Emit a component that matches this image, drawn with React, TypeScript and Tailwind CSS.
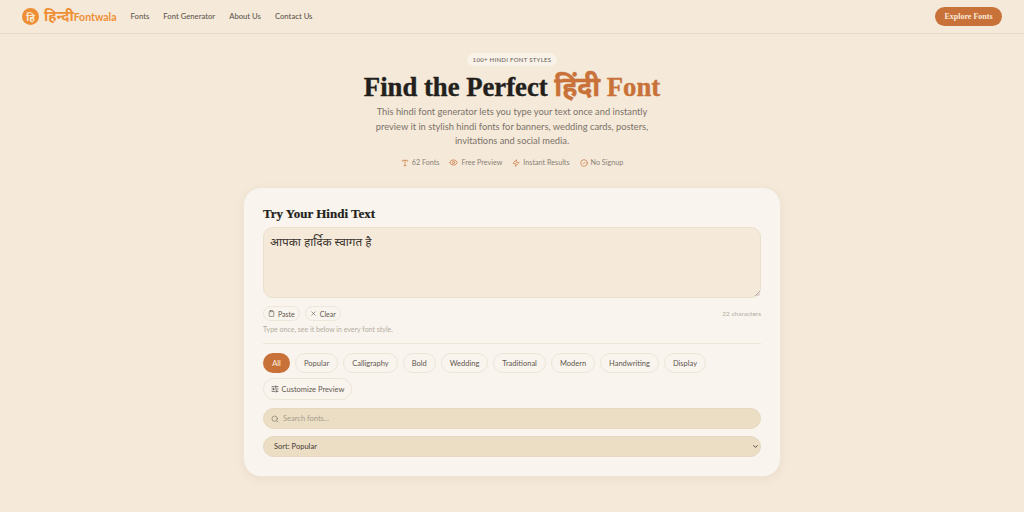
import { ChevronDown, CircleCheck, Clipboard, Eye, Search, SlidersHorizontal, Type, X, Zap } from "lucide-react";

const navLinks = ["Fonts", "Font Generator", "About Us", "Contact Us"];
const filters = ["Popular", "Calligraphy", "Bold", "Wedding", "Traditional", "Modern", "Handwriting", "Display"];
const sans = "font-['Lato','Noto_Sans',sans-serif]";
const serif = "font-['Liberation_Serif','Noto_Sans',serif]";

function Logo() {
  return (
    <div className="flex items-center gap-[5px]">
      <div className="flex h-[17px] w-[17px] items-center justify-center rounded-full bg-[#ee8f35]">
        <span className="text-[10px] font-bold leading-none text-[#f8ead8]">हि</span>
      </div>
      <span className="text-[14.5px] font-bold leading-none text-[#ee8f35]">
        हिन्दी<span className="text-[10.5px]">Fontwala</span>
      </span>
    </div>
  );
}

export default function App() {
  return (
    <div className={`h-[512px] w-[1024px] overflow-hidden bg-[#f5e9d9] ${sans}`}>
      <header className="flex h-[34px] items-center justify-between border-b border-[#e9dccb] px-[22px]">
        <div className="flex items-center gap-[14px]">
          <Logo />
          <nav className="flex items-center gap-[14px] text-[7.7px] font-medium text-[#5f5850]">
            {navLinks.map((link) => (
              <a key={link}>{link}</a>
            ))}
          </nav>
        </div>
        <button className={`h-[19px] w-[67px] rounded-full bg-[#c8723a] text-[8px] font-bold text-[#f8ead8] ${serif}`}>
          Explore Fonts
        </button>
      </header>

      <section className="flex flex-col items-center pt-[19px]">
        <span className="flex h-[13px] items-center rounded-full bg-[#f9f2e8] px-[6px] text-[6px] font-medium tracking-[0.05em] text-[#6b645b]">
          100+ HINDI FONT STYLES
        </span>
        <h1 className={`mt-[5px] text-[26.7px] font-bold leading-[32px] text-[#231f1c] [-webkit-text-stroke:0.4px] ${serif}`}>
          Find the Perfect <span className="text-[#c8723a]">हिंदी Font</span>
        </h1>
        <p className="mt-[2px] w-[285px] text-center text-[9.3px] leading-[14.5px] text-[#7a7268]">
          This hindi font generator lets you type your text once and instantly preview it in stylish hindi fonts for
          banners, wedding cards, posters, invitations and social media.
        </p>
        <div className="mt-[9px] flex items-center gap-[10px] text-[7.2px] text-[#8a8278]">
          <span className="flex items-center gap-[3px]">
            <Type size={8} className="text-[#c8723a]" /> 62 Fonts
          </span>
          <span className="flex items-center gap-[3px]">
            <Eye size={9} className="text-[#c8723a]" /> Free Preview
          </span>
          <span className="flex items-center gap-[3px]">
            <Zap size={8} className="text-[#c8723a]" /> Instant Results
          </span>
          <span className="flex items-center gap-[3px]">
            <CircleCheck size={8} className="text-[#c8723a]" /> No Signup
          </span>
        </div>
      </section>

      <main className="mx-auto mt-[19px] h-[290px] w-[538px] rounded-[18px] border border-[#efe5d8] bg-[#f9f4ed] px-[19px] pt-[18px] shadow-[0_2px_8px_rgba(120,90,50,0.08)]">
        <h2 className={`text-[13px] font-bold leading-[16px] text-[#231f1c] [-webkit-text-stroke:0.2px] ${serif}`}>
          Try Your Hindi Text
        </h2>
        <div className="relative mt-[5px]">
          <textarea
            defaultValue="आपका हार्दिक स्वागत है"
            className="block h-[71px] w-full resize-none rounded-[10px] border border-[#ebdfce] bg-[#f5e9d9] px-[6px] py-[5px] text-[11.8px] leading-[18px] text-[#3a342e] outline-none"
          />
          <svg viewBox="0 0 5 5" className="absolute bottom-[2px] right-[1px] h-[5px] w-[5px] text-[#8a8278]">
            <path d="M0 5 5 0M2.5 5 5 2.5" stroke="currentColor" strokeWidth="0.6" />
          </svg>
        </div>
        <div className="mt-[8px] flex items-center justify-between">
          <div className="flex gap-[5px]">
            <button className="flex h-[15px] items-center gap-[3px] rounded-full border border-[#efe6da] px-[4px] text-[7px] text-[#5f5850]">
              <Clipboard size={7} /> Paste
            </button>
            <button className="flex h-[15px] items-center gap-[3px] rounded-full border border-[#efe6da] px-[4px] text-[7px] text-[#5f5850]">
              <X size={7} /> Clear
            </button>
          </div>
          <span className="text-[6.5px] text-[#b3aca2]">22 characters</span>
        </div>
        <p className="mt-[4px] text-[7px] leading-[9px] text-[#b3aca2]">Type once, see it below in every font style.</p>
        <hr className="mt-[9px] border-[#efe6da]" />
        <div className="mt-[9px] flex flex-wrap gap-[5px]">
          <button className="h-[20px] w-[27px] rounded-full bg-[#c8723a] text-[7.5px] font-medium text-[#f8ead8]">All</button>
          {filters.map((filter) => (
            <button
              key={filter}
              className="h-[20px] rounded-full border border-[#eee5d9] px-[8px] text-[7.5px] text-[#5f5850]"
            >
              {filter}
            </button>
          ))}
          <button className="flex h-[22px] items-center gap-[3px] rounded-full border border-[#eee5d9] px-[6.5px] text-[7.5px] text-[#5f5850]">
            <SlidersHorizontal size={8} strokeWidth={2.5} /> Customize Preview
          </button>
        </div>
        <div className="mt-[8px] flex h-[21px] items-center gap-[4px] rounded-full border border-[#e5d8c2] bg-[#ecdec5] px-[7px] text-[7.5px] text-[#a69c8c]">
          <Search size={8} className="text-[#80786c]" /> Search fonts...
        </div>
        <div className="relative mt-[7px]">
          <select className="block h-[21px] w-full appearance-none rounded-full border border-[#e5d8c2] bg-[#ecdec5] px-[10px] text-[7.5px] font-medium text-[#4f483f] outline-none">
            <option>Sort: Popular</option>
          </select>
          <ChevronDown size={7} strokeWidth={3} className="absolute right-[2px] top-[7px] text-[#3a342e]" />
        </div>
      </main>
    </div>
  );
}
